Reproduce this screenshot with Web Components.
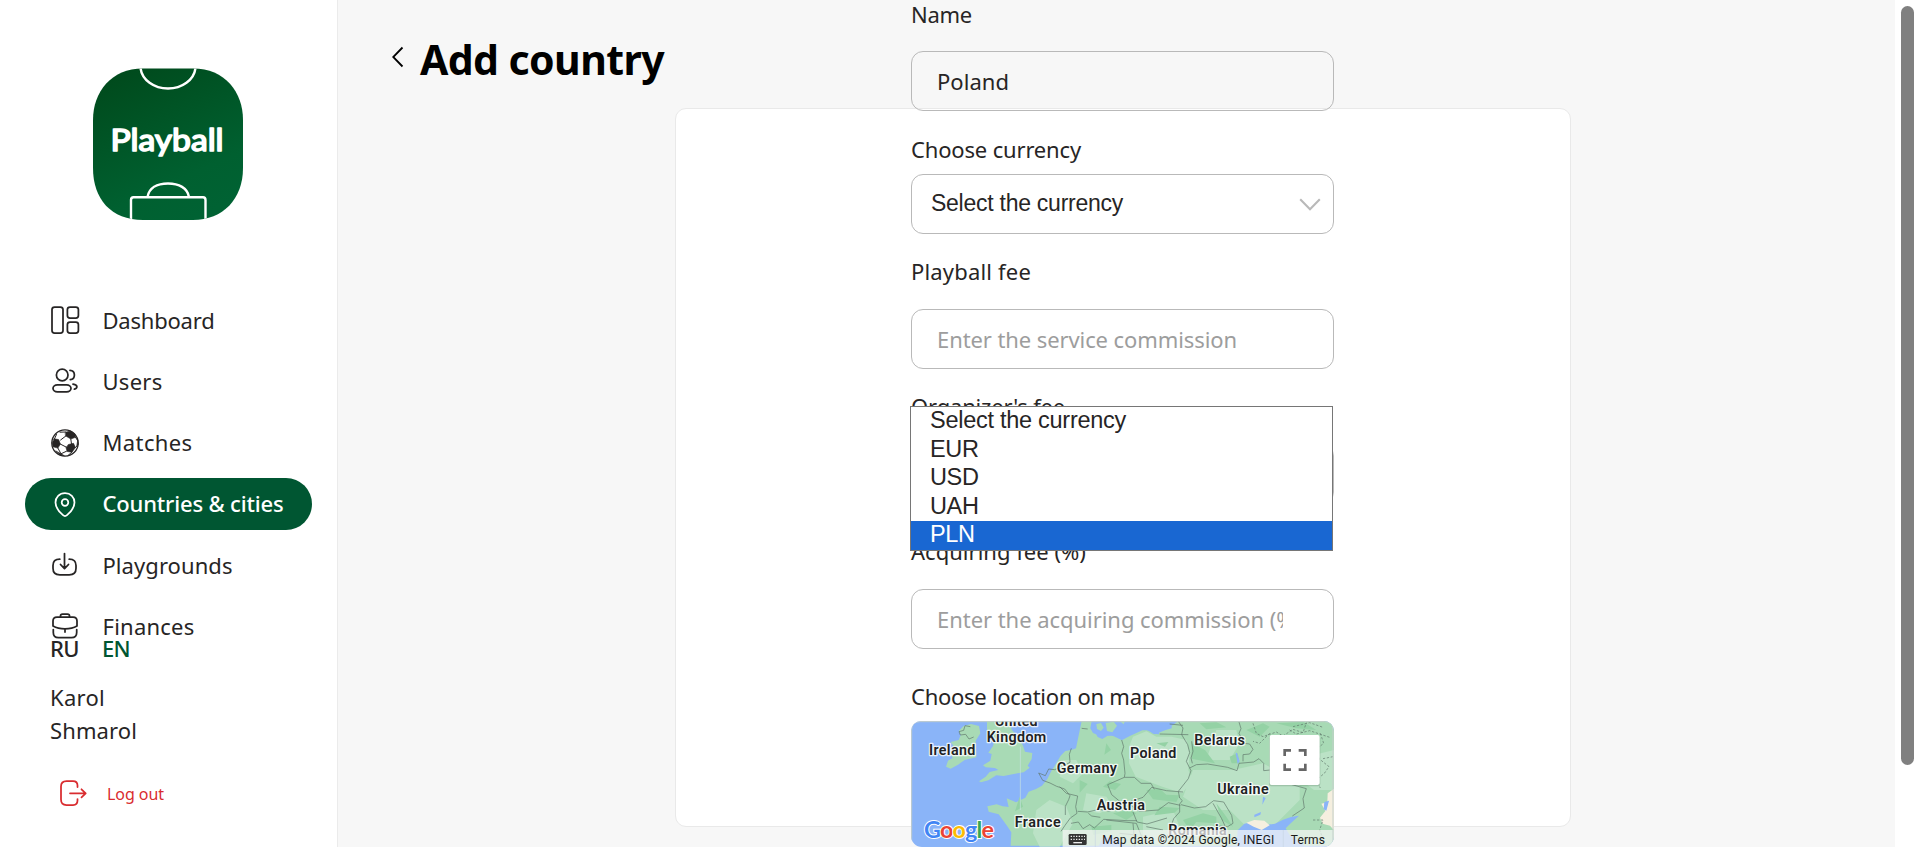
<!DOCTYPE html>
<html lang="en">
<head>
<meta charset="utf-8">
<title>Add country</title>
<style>
html,body{margin:0;height:100%;overflow:hidden;background:#f7f7f7}
body{font-family:"Noto Sans","Open Sans",sans-serif;font-size:22px;color:#272525}
</style>
</head>
<body>
<admin-app></admin-app>
<script>
function define(name, html, setup){
  const t=document.createElement('template');
  t.innerHTML=html;
  customElements.define(name,class extends HTMLElement{
    connectedCallback(){
      if(this.shadowRoot)return;
      this.attachShadow({mode:'open'}).append(t.content.cloneNode(true));
      if(setup)setup.call(this,this.shadowRoot);
    }
  });
}

/* Text tracked so that it fills the advance width given in "w". */
define('fit-text',`<style>:host{display:inline-block;white-space:nowrap}</style><slot></slot>`,function(){
  const w=+this.getAttribute('w'), n=this.textContent.length;
  this.style.letterSpacing=((w-this.getBoundingClientRect().width)/n).toFixed(3)+'px';
});

const icons={
 dash:`<rect x="1" y="1" width="11" height="26" rx="2.6"/><rect x="16.4" y="1" width="11" height="11" rx="2.6"/><rect x="16.4" y="16" width="11" height="11" rx="2.6"/>`,
 users:`<circle cx="11.2" cy="8" r="5.8"/><rect x="2" y="17.8" width="18" height="7" rx="4.4" ry="3.5"/><path d="M19 3.3c3 .2 4.4 2.2 4.4 4.7s-1.500 4.400-4.100 4.700M22 17.200c2.400.3 3.900 1.300 3.900 2.600 0 1.200-1 2-2.500 2.400"/>`,
 ball:`<circle cx="14" cy="14" r="13.200" stroke-width="1.300"/><g fill="currentColor" stroke-width=".6"><path d="M14.500 3.200l5-1.200 4.500 3 .5 3.300-4.700 1.700-5-3zM3.300 9.800l4.300.8 1.800 4.500-2.500 4-4.900-1.300-.8-4zM17.500 15.500l5-1.200 1.900 4.200-3.400 4.700-4.800-.7-1.100-3.500zM5 22l5 2.800 3.400 1.900-4.200-.6zM26.800 11.500l.5 4-1.400 1.500z"/></g><path stroke-width="1" d="M14.800 7l-5.200 4M9.400 15.100l6.400 3.300M19.800 10l.7 5M6.900 19.100L10 24.800l5.500-2.600M9 3.200L14.500 3M5.500 5.500l-2 4.300M24.500 8.300l2.300 3.500M24.400 18.500l1.500-1.500M17 26.500l4-3.500"/>`,
 pin:`<path d="M14 3.200c5.600 0 9.500 4.100 9.500 9.300 0 5.400-4.300 10-7.500 12.700a3 3 0 0 1-4 0C8.800 22.500 4.500 17.900 4.500 12.500c0-5.200 3.900-9.300 9.500-9.300z"/><circle cx="14" cy="12.500" r="3.300"/>`,
 down:`<path d="M8.800 8.200C4 8.200 2 10.300 2 14.500v2.700c0 4.500 2.200 6.600 6.800 6.600h9.400c4.600 0 6.800-2.100 6.800-6.600v-2.700c0-4.200-2-6.300-6.800-6.300M13.500 2.500v15M9.500 13.500l4 4.200 4-4.200"/>`,
 bag:`<path d="M9.500 5V3.700C9.500 2.400 10.300 2 11.500 2h5c1.200 0 2 .4 2 1.700V5M6 5h16c2.700 0 4 1.400 4 4v5c-6.500 3.700-17.500 3.700-24 0V9c0-2.600 1.300-4 4-4zM2.300 17.500v3c0 3.500 1.700 5.200 5.200 5.200h13c3.500 0 5.200-1.700 5.200-5.200v-3M14 16.800V20"/>`,
 out:`<path d="M18.500 8V6.500C18.500 3.400 16.700 2 14 2H7.500C4 2 2 4 2 7.500v13C2 24 4 26 7.500 26H14c2.700 0 4.500-1.400 4.500-4.500V20M11 14.300h15.500M22.500 10.300l4.200 4-4.200 4"/>`
};
define('ui-icon',`<style>:host{display:block;width:28px;height:28px;flex:none}svg{display:block;overflow:visible;fill:none;stroke:currentColor;stroke-width:1.750;stroke-linecap:round;stroke-linejoin:round}</style><svg width="28" height="28" viewBox="0 0 28 28"></svg>`,function(r){
  r.querySelector('svg').innerHTML=icons[this.getAttribute('name')];
});

define('brand-logo',`<style>:host{display:block;width:150px;height:152px}svg{display:block}</style>
<svg width="150" height="152" viewBox="0 0 150 152"><defs><linearGradient id="g" x1=".2" y1="0" x2=".65" y2="1"><stop offset="0" stop-color="#004a1c"/><stop offset=".75" stop-color="#006030"/><stop offset="1" stop-color="#006233"/></linearGradient>
<clipPath id="c"><path id="s" d="M50 0.500H100C132 .5 150 24 150 52V100C150 131 130 152 100 152H50C18 152 0 131 0 100V52C0 24 18 .5 50 .5Z"/></clipPath></defs>
<g clip-path="url(#c)"><rect width="150" height="152" fill="url(#g)"/><g fill="none" stroke="#fff" stroke-width="2.400"><path d="M47.500 0C49 12 61 20.500 75 20.500S101 12 102.500 0M38 153V132Q38 129.300 40.500 129.300H110Q112.500 129.300 112.500 132V153M54.500 129C56 120 64 115.500 75 115.500S94.500 120 96 129"/></g>
<text x="17.500" y="82.500" textLength="113" lengthAdjust="spacingAndGlyphs" font-family="Lato,sans-serif" font-weight="400" font-size="30" fill="#fff" stroke="#fff" stroke-width="1.600" stroke-linejoin="round" stroke-linecap="round">Playball</text></g></svg>`);

define('nav-item',`<style>:host{display:flex;align-items:center;height:52px;box-sizing:border-box;padding-left:26px;gap:23.500px;border-radius:26px;line-height:30px}
:host([active]){background:#005632;color:#fff;font-weight:500}.t{padding-bottom:1px}</style><ui-icon></ui-icon><span class="t"><slot></slot></span>`,function(r){
  const i=document.createElement('ui-icon');i.setAttribute('name',this.getAttribute('icon'));r.querySelector('ui-icon').replaceWith(i);
});

define('side-bar',`<style>:host{display:flex;flex-direction:column;width:338px;height:847px;box-sizing:border-box;background:#fff;border-right:1px solid #ebebeb;padding:68px 25px 0 25px;flex:none}
brand-logo{margin-left:68px;flex:none}
nav{display:flex;flex-direction:column;gap:9.300px;margin-top:74px;flex:1;min-height:0}nav>*{flex:none}
footer{flex:none;height:214px;padding-left:25px;line-height:33px}
.lang{display:flex;gap:23px;font-weight:500;line-height:30px;height:48px}.lang b{font-weight:500;color:#005632}
.name{display:flex;flex-direction:column;align-items:flex-start}
.out{display:flex;align-items:center;gap:20px;margin:32px 0 0 9px;color:#d92c2f;font-size:16px;height:28px}.out span{padding-top:3px}</style>
<brand-logo></brand-logo>
<nav><nav-item icon="dash"><fit-text w="112">Dashboard</fit-text></nav-item><nav-item icon="users"><fit-text w="60">Users</fit-text></nav-item><nav-item icon="ball"><fit-text w="90">Matches</fit-text></nav-item><nav-item icon="pin" active><fit-text w="181">Countries &amp; cities</fit-text></nav-item><nav-item icon="down"><fit-text w="130">Playgrounds</fit-text></nav-item><nav-item icon="bag"><fit-text w="92">Finances</fit-text></nav-item></nav>
<footer><div class="lang"><fit-text w="29">RU</fit-text><b><fit-text w="28">EN</fit-text></b></div><div class="name"><fit-text w="55">Karol</fit-text><fit-text w="87">Shmarol</fit-text></div><div class="out"><ui-icon name="out"></ui-icon><span><fit-text w="57">Log out</fit-text></span></div></footer>`);

define('form-field',`<style>:host{display:block}.l{height:30px;line-height:28px;margin-bottom:var(--gap,22px)}
.box{height:60px;box-sizing:border-box;border:1px solid #b9b9b9;border-radius:12px;padding:14px 50px 0 25px;line-height:30px}
.clip{overflow:hidden;white-space:nowrap}
:host([hint]) .box{color:#9d9d9d}</style><div class="l"><slot name="label"></slot></div><div class="box"><div class="clip"><slot></slot></div></div>`);

define('select-field',`<style>:host{display:block}.l{height:30px;line-height:28px;margin-bottom:9px}
.box{display:flex;align-items:center;justify-content:space-between;height:60px;box-sizing:border-box;border:1px solid #b9b9b9;border-radius:12px;padding:0 12px 1px 19px;font:23px "Liberation Sans",Arial,sans-serif}
svg{margin-top:1px}</style><div class="l"><slot name="label"></slot></div><div class="box"><slot></slot><svg width="22" height="13" viewBox="0 0 22 13" fill="none" stroke="#b9b9b9" stroke-width="2.100"><path d="M1.200 1.200L11 11.200l9.800-10"/></svg></div>`);

define('option-list',`<style>:host{display:block;box-sizing:border-box;width:423px;height:145px;border:1px solid #767676;background:#fff;font:23.500px/28.500px "Liberation Sans",Arial,sans-serif}
div{height:28.500px;padding-left:19px;line-height:27px}.on{background:#1967d2;color:#fff;height:29px}</style>
<div><fit-text w="196">Select the currency</fit-text></div><div><fit-text w="48.500">EUR</fit-text></div><div><fit-text w="48.500">USD</fit-text></div><div><fit-text w="48.500">UAH</fit-text></div><div class="on"><fit-text w="44.500">PLN</fit-text></div>`);

define('location-map',`<style>:host{display:block;height:126px;border-radius:10px 10px 11px 11px;overflow:hidden}svg{display:block}</style>
<svg width="423" height="126" viewBox="34 123 1269 378" font-family="Roboto,sans-serif">
<rect x="34" y="123" width="1269" height="378" fill="#8ab4f8"/>
<g fill="#a8dab5">
<path d="M178 152l14-14 22-6 24 6 4 22-14 22 2 50-35 8-20 14-22 12-14-6 6-18 14-8-8-14 12-20-10-14 24-6 6-14z"/>
<path d="M262 123h68l6 26 20 22 14 26 6 18 22 4-2 18-12 20 6 6-18 14-30 5-30 6-22-2-24 15-22 6-6-3 20-14 12-14 26-6-10-6-28-2-8-6 22-14 4-20-10-4 14-20 6-22-16-6-8-22z"/>
<path d="M546 123h30l-4 22 8 14 24 10 30-4 26 12 22-12 36-14 22-2 26 14 30-12 20-6 0-26h500v378H333l2-40-12-18-26-36-30-8-4-16 28-6 18 6 18 2-6-26 28 12 28-14 10-18 22-8 18-10 16-20 12-24 8-12 20-34 14-14 20-4 12-4z"/>
</g>
<path d="M584 123h252l-20 14-26 4-12 8 0 14-18-2-12-10-20 0-36 16-26 14-20-14-22 0-16 10-14-6-8-16z" fill="#8ab4f8"/>
<path d="M590 132l14-3 8 14-8 10-12-6zM618 129l24-4 10 12-14 20-16-4zM660 123l16 0-4 10z" fill="#a8dab5"/>
<g fill="#bbe2c6"><path d="M700 170l40-16 30 16 46 0 44 10 10 40-4 50 12 30-30 40-60-20-80-30-20-40 0-50zM410 390l40-30 50 20 20 50-40 70h-60l-20-40zM880 270l120 0 90-20 110 60 0 50-90 90-60 0-60-60-80 0-60-40zM490 240l40 0 20 40-30 30-40-20zM730 410l90-20 20 50-40 60-70-20zM1220 230l83-20v120l-60 0-40-30zM950 150l60 0 10 40-30 50-70 0zM560 340l60 10 20 30-40 20-50-10z"/></g>
<g fill="#94d2a5"><path d="M610 320l20-16 34 8-18 18zM740 330l40-4 20 18 40 2-10 20-70-8zM640 400l50-10 20 10-30 20zM876 190l40 20 30 40-70-14zM1040 150l50-20 20 10-30 30zM850 420l60-20 40 10 0 20-60-4-20 24zM540 300l24 12-24 26zM360 350l10 30-24 14zM575 440l60-5 0 18-54 12zM620 190l14 20-20 14zM1130 130l80-5 40 25-60-5zM950 370l30 40 20 30-34-20zM780 380l60 4-16 14-60 8zM770 190l36-4-10 14zM700 196l20 8-14 10zM900 130l50-4 30 16-60 6zM990 230l24-10 6 30-24 0z"/></g>
<g fill="#8ab4f8"><path d="M1010 501l4-50 20-20 22-4 30 10 40-6 24-12 24-8 24-4-24 22-16 16 12 20 50 36zM596 501l14-30 40 2 30 28zM1090 350l8 4-10 20zM1008 220l4-2 8 26-6 8zM1064 404l20-8-2 8-18 8z"/></g>
<path d="M1040 428l24-8 30 2 16 14-24 14-24-10zM1284 340l19-14v125l-12-14-22-6-8-18 16-20-12-22 18-4z" fill="#f5efdf"/><path d="M1274 366l14-4-8 30-8-4z" fill="#8ab4f8"/>
<path d="M362 200V390" stroke="#c8e4e2" stroke-width="2"/>
<g fill="none" stroke="#5f756a" stroke-width="2" stroke-linejoin="round">
<path d="M212 140l-16-3-4 14-14 4 4 10 16-2 10 14 14-6M546 145l18 2M515 205l-6 18 2 24-22 12-24 10-18-2-10 20-20-8 12 22 22 8 20 10 24 8 16 20-4 12-10 20 0 26M666 180l6 20-6 20 6 20 4 40-2 12-50 22 12 30 34 28 60-20 26-30 44 10 50 4M674 292l30 0 20 18 30 0 10 18M480 320l20 20 34 8-6 32 4 20-20 14-16 22-12 18M534 394l30 2 34-8 34 6M514 430l22-4 14 20 20-12 14 10 28-26 70 4 30 0M566 400l10 8 26 4M810 132l40 4M780 162l86 2M836 124l14 20-4 20 18 30 6 24-10 26 14 28-8 24-30 38 4 20 8 8-8 10 0 24-18 20-16 46-10 18M876 184l4 30-6 20 4 16M870 264l20-10 34-2 60 10 28 10 6-22 44-4 16-10 14 14 0 22 20-2M1018 126l6 20-6 14 16 30 16 2 10 16-10 14-20 2 0 20M844 374l40 10 34-4 24-18 30 4 24 40 4 24-16 10-28-2M940 370l26 46 10 22M690 374l30 20 56-4 30-22 36 8M700 396l12 30 30 6 60-18M620 420l90 10 16 40M1170 312l50 14-10 30 4 28-36 24M740 440l50 10M660 460l40 4M700 430l6 70"/>
<path stroke-dasharray="7 5" d="M1060 130l10 30 20 10 40-14 20 12 30-20 30 10 10-30M1170 150l20 12 40-10 60 20M1110 160l-30 30-20-6M1262 160l10 30-20 16 6 30 30 24-14 20-24 20 12 24M1300 230l-30 6M1180 140l50-12 40 14M1240 420l30 0-10 30 14 36"/></g>
<g font-size="43" font-weight="600" fill="#202124" stroke="#fff" stroke-opacity=".8" stroke-width="8" paint-order="stroke" stroke-linejoin="round">
<text x="286" y="138" textLength="128">United</text><text x="261" y="185" textLength="179">Kingdom</text><text x="88" y="226" textLength="139">Ireland</text><text x="691" y="233" textLength="139">Poland</text><text x="884" y="194" textLength="152">Belarus</text><text x="471" y="279" textLength="181">Germany</text><text x="953" y="342" textLength="154">Ukraine</text><text x="591" y="391" textLength="145">Austria</text><text x="345" y="441" textLength="138">France</text><text x="806" y="466" textLength="175">Romania</text></g>
<g font-family="Lato,sans-serif" font-size="70" font-weight="700" stroke="#fff" stroke-width="6" paint-order="stroke" lengthAdjust="spacingAndGlyphs"><text x="73" y="473" textLength="210" fill="#4285f4">G<tspan fill="#ea4335">o</tspan><tspan fill="#fbbc04">o</tspan><tspan fill="#4285f4">g</tspan><tspan fill="#34a853">l</tspan><tspan fill="#ea4335">e</tspan></text></g>
<rect x="489" y="450" width="814" height="51" fill="#f5f5f5" fill-opacity=".72"/><path d="M587 450v51M1151 450v51" stroke="#c9d8e4" stroke-width="2"/>
<rect x="507" y="462" width="54" height="33" rx="4" fill="#333"/><path d="M513 469h43M513 478h43" stroke="#eee" stroke-width="4" stroke-dasharray="4 4"/><path d="M521 488h26" stroke="#eee" stroke-width="4"/>
<g fill="#1a1a1a" font-size="36"><text x="608" y="492" textLength="516">Map data ©2024 Google, INEGI</text><text x="1173" y="492" textLength="103">Terms</text></g>
<rect x="1108" y="168" width="154" height="151" rx="7" fill="#476b55" opacity=".25"/><rect x="1110" y="165" width="150" height="150" rx="6" fill="#fff"/><path d="M1155 228v-17h19M1197 211h20v17M1155 251v18h19M1197 269h20v-18" fill="none" stroke="#666" stroke-width="8"/>
<path d="M36 501V150Q36 125 61 125H1275Q1300 125 1300 150V501" fill="none" stroke="#c4cfca" stroke-width="3"/>
</svg>`);

define('page-content',`<style>:host{display:grid;grid-template-columns:337px 896px 1fr;flex:1;height:847px;background:#f7f7f7;overflow:hidden}
header{display:flex;gap:16px;padding-left:54px;height:120px;white-space:nowrap;z-index:1}header svg{margin-top:46px;flex:none}
h1{margin:30px 0 0;font-size:41px;line-height:58px;font-weight:700;color:#000}
.card{box-sizing:border-box;height:719px;margin-top:108px;border:1px solid #e9e9e9;border-radius:11px;background:#fff;grid-area:1/2}
form{grid-area:1/2;width:423px;margin:0 0 0 236px;position:relative}
.a{--gap:21px}.b{margin-top:24px}.c{margin-top:23px}.d{margin-top:33px}
.map{margin:33px 0 9px;height:30px;line-height:28px}
option-list{position:absolute;left:-1px;top:406px}</style>
<header><svg width="12" height="22" viewBox="0 0 12 22" fill="none" stroke="#000" stroke-width="1.800"><path d="M10.500 1.500L1.200 11l9.300 9.500"/></svg><h1><fit-text w="244">Add country</fit-text></h1></header>
<div class="card"></div>
<form><form-field class="a"><fit-text slot="label" w="61">Name</fit-text><fit-text w="72">Poland</fit-text></form-field>
<select-field class="b"><fit-text slot="label" w="170">Choose currency</fit-text><fit-text w="192">Select the currency</fit-text></select-field>
<form-field class="c" hint><fit-text slot="label" w="120">Playball fee</fit-text><fit-text w="300">Enter the service commission</fit-text></form-field>
<form-field class="c"><fit-text slot="label" w="154">Organizer's fee</fit-text></form-field>
<form-field class="d" hint><fit-text slot="label" w="175">Acquiring fee (%)</fit-text><fit-text w="364">Enter the acquiring commission (%)</fit-text></form-field>
<div class="map"><fit-text w="244">Choose location on map</fit-text></div><location-map></location-map>
<option-list></option-list></form>`);

define('scroll-track',`<style>:host{display:block;width:25px;box-sizing:border-box;background:#fff;padding:6px 6px 0}i{display:block;width:13px;height:759px;border-radius:7px;background:#808080}</style><i></i>`);
define('admin-app',`<style>:host{display:flex;width:1920px;height:847px;overflow:hidden}</style><side-bar></side-bar><page-content></page-content><scroll-track></scroll-track>`);
</script>
</body>
</html>
